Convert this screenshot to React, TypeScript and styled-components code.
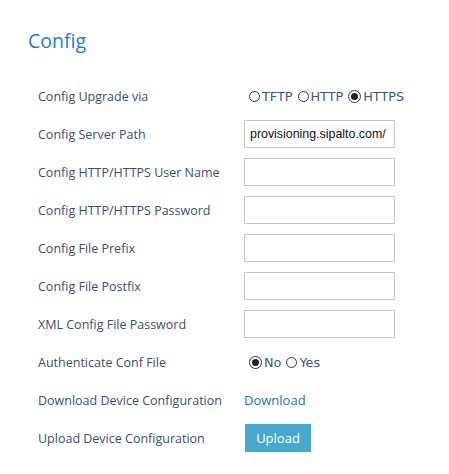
import React from 'react';
import styled, {createGlobalStyle} from 'styled-components';

const GlobalStyle = createGlobalStyle`
  body {
    margin: 0;
    background: #fff;
    font-family: "Open Sans", sans-serif;
  }
`;

const Page = styled.div`
  padding: 26px 0 0 28px;
`;

const Title = styled.h2`
  margin: 0 0 21px 0;
  font-weight: 400;
  font-size: 19.5px;
  line-height: 30px;
  color: #1a7fd0;
`;

const Form = styled.div`
  display: grid;
  grid-template-columns: 206px 1fr;
  grid-auto-rows: 38px;
  padding-left: 10px;
`;

const Label = styled.div`
  display: flex;
  align-items: center;
  font-size: 12.5px;
  color: #3b4d72;
`;

const Field = styled.div`
  display: flex;
  align-items: center;
`;

const TextInput = styled.input`
  box-sizing: border-box;
  width: 151px;
  height: 28px;
  border: 1px solid #c8c8c8;
  padding: 0 5px;
  font-family: "Liberation Sans", Arial, sans-serif;
  font-size: 12.4px;
  color: #111;
  outline: none;
`;

const RadioGroup = styled.div`
  display: flex;
  align-items: center;
  padding-left: 5px;
  font-family: "DejaVu Sans", sans-serif;
  font-size: 12.8px;
  color: #39588a;
`;

const RadioLabel = styled.label`
  display: flex;
  align-items: center;
  margin-right: 5px;
`;

const Circle = styled.span<{ $on?: boolean }>`
  box-sizing: border-box;
  width: ${p => p.$on ? 13 : 11}px;
  height: ${p => p.$on ? 13 : 11}px;
  border-radius: 50%;
  border: ${p => p.$on ? 1.5 : 1}px solid #333;
  margin-right: 2px;
  display: flex;
  align-items: center;
  justify-content: center;

  &::after {
    content: '';
    display: ${p => p.$on ? 'block' : 'none'};
    width: 7px;
    height: 7px;
    border-radius: 50%;
    background: #222;
  }
`;

const Link = styled.a`
  font-size: 13px;
  color: #2a6fc0;
  text-decoration: none;
  cursor: pointer;
`;

const UploadButton = styled.button`
  margin-left: 1px;
  width: 66px;
  height: 28px;
  border: none;
  background: #46a8cc;
  color: #fff;
  font-family: "Open Sans", sans-serif;
  font-size: 13px;
  cursor: pointer;
`;

const Radio = ({label, checked}: { label: string, checked?: boolean }) => (
  <RadioLabel>
    <Circle $on={checked}/>
    {label}
  </RadioLabel>
);

const inputs = [
  {label: 'Config Server Path', value: 'provisioning.sipalto.com/'},
  {label: 'Config HTTP/HTTPS User Name', value: ''},
  {label: 'Config HTTP/HTTPS Password', value: ''},
  {label: 'Config File Prefix', value: ''},
  {label: 'Config File Postfix', value: ''},
  {label: 'XML Config File Password', value: ''},
];

const App = () => {
  return (
    <Page>
      <GlobalStyle/>
      <Title>Config</Title>
      <Form>
        <Label>Config Upgrade via</Label>
        <Field>
          <RadioGroup>
            <Radio label="TFTP"/>
            <Radio label="HTTP"/>
            <Radio label="HTTPS" checked/>
          </RadioGroup>
        </Field>
        {inputs.map((row) => (
          <React.Fragment key={row.label}>
            <Label>{row.label}</Label>
            <Field><TextInput defaultValue={row.value}/></Field>
          </React.Fragment>
        ))}
        <Label>Authenticate Conf File</Label>
        <Field>
          <RadioGroup>
            <Radio label="No" checked/>
            <Radio label="Yes"/>
          </RadioGroup>
        </Field>
        <Label>Download Device Configuration</Label>
        <Field><Link>Download</Link></Field>
        <Label>Upload Device Configuration</Label>
        <Field><UploadButton>Upload</UploadButton></Field>
      </Form>
    </Page>
  );
}

export default App
